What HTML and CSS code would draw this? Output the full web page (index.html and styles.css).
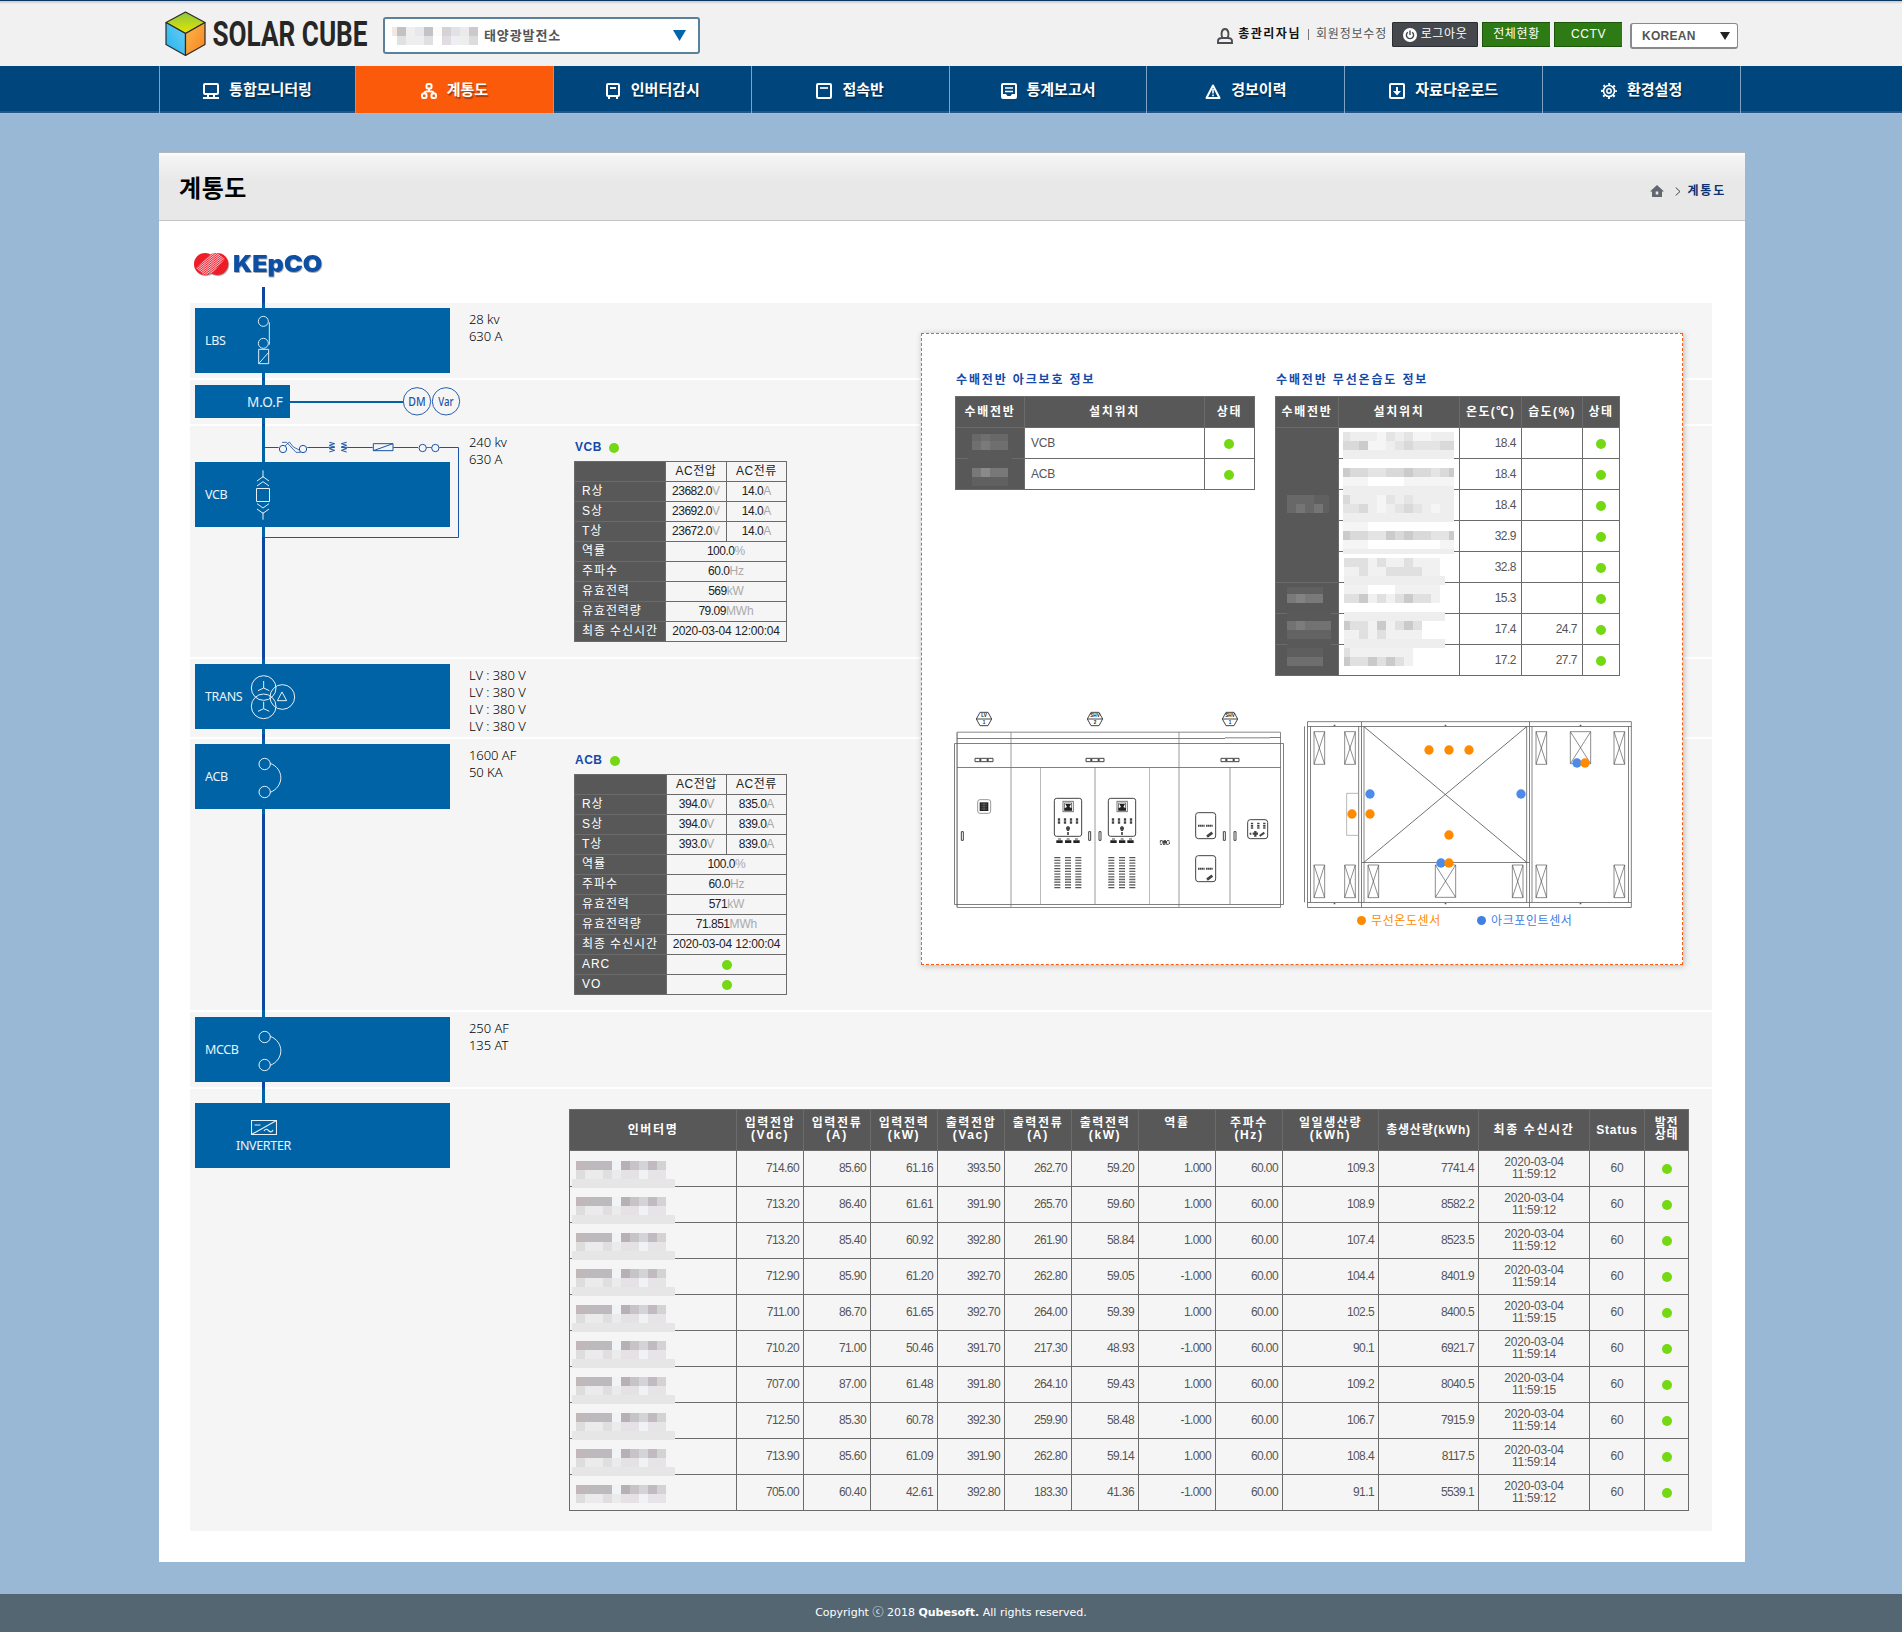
FILE: index.html
```html
<!DOCTYPE html>
<html lang="ko">
<head>
<meta charset="utf-8">
<title>SOLAR CUBE - 계통도</title>
<link rel="stylesheet" href="styles.css">
</head>
<body>
<header class="top">
  <div class="top-inner">
    <svg class="brand" width="206" height="50" viewBox="163 8 206 50" role="img" aria-label="SOLAR CUBE">
      <defs>
        <linearGradient id="cubeTop" x1="0" y1="0" x2="0" y2="1"><stop offset="0" stop-color="#8dc63f"/><stop offset="1" stop-color="#e6e600"/></linearGradient>
        <linearGradient id="cubeLeft" x1="0" y1="1" x2="1" y2="0"><stop offset="0" stop-color="#1fb4ee"/><stop offset="1" stop-color="#6fcdf5"/></linearGradient>
        <linearGradient id="cubeRight" x1="0" y1="0" x2="1" y2="1"><stop offset="0" stop-color="#fdb94a"/><stop offset="1" stop-color="#f58220"/></linearGradient>
      </defs>
      <g stroke="#2b2b2b" stroke-width="1.2" stroke-linejoin="round">
        <path fill="url(#cubeTop)" d="M185.5 12 205 22.500 185.500 33.500 166 22.500z"/>
        <path fill="url(#cubeLeft)" d="M166 22.500 185.500 33.500V55.500L166 44.500z"/>
        <path fill="url(#cubeRight)" d="M205 22.500 185.500 33.500V55.500L205 44.500z"/>
      </g>
      <text class="brand-text" x="212.500" y="46" textLength="155" lengthAdjust="spacingAndGlyphs">SOLAR CUBE</text>
    </svg>
    <div class="plant-select"><span class="px px-plant"></span><span class="plant-name">태양광발전소</span><svg width="13" height="11" viewBox="0 0 13 11"><path fill="#0065ab" d="M0 0h13L6.500 11z"/></svg></div>
    <div class="user">
      <svg width="16" height="16" viewBox="0 0 16 16" fill="none" stroke="#4b4d52" stroke-width="1.900"><path d="M5.300 9.800C4 7.500 4 1 8 1s4 6.500 2.700 8.800M5 10h6c2.500 0 4 .8 4 3v2H1v-2c0-2.200 1.500-3 4-3z"/></svg>
      <b>총관리자님</b><i></i><span>회원정보수정</span>
    </div>
    <a class="btn btn-logout"><svg width="14" height="14" viewBox="0 0 14 14"><circle cx="7" cy="7" r="7" fill="#fff"/><path d="M4.800 4.200a3.600 3.600 0 1 0 4.400 0M7 2.500v4.500" fill="none" stroke="#44484c" stroke-width="1.400"/></svg>로그아웃</a>
    <a class="btn btn-green">전체현황</a>
    <a class="btn btn-green">CCTV</a>
    <div class="lang">KOREAN<svg width="10" height="8" viewBox="0 0 10 8"><path fill="#222" d="M0 0h10L5 8z"/></svg></div>
  </div>
</header>

<nav class="gnb">
  <ul>
    <li><svg width="16" height="16" viewBox="0 0 16 16" fill="none" stroke="#fff" stroke-width="2"><rect x="1" y="1" width="14" height="10" rx="1"/><path d="M0 15h16M5 11v3M11 11v3"/></svg>통합모니터링</li>
    <li class="on"><svg width="16" height="16" viewBox="0 0 16 16" fill="none" stroke="#fff" stroke-width="2"><rect x="5.500" y="1" width="5" height="4.500" rx="1.500"/><rect x="1" y="10.500" width="4.500" height="4.500" rx="1.500"/><rect x="10.500" y="10.500" width="4.500" height="4.500" rx="1.500"/><path d="M8 6v2.500M3.300 10.500C3.300 8.500 5 8.200 8 8.200s4.700.3 4.700 2.300"/></svg>계통도</li>
    <li><svg width="16" height="16" viewBox="0 0 16 16" fill="none" stroke="#fff" stroke-width="2"><rect x="2" y="1" width="12" height="12" rx="1"/><path d="M5 5h6M4 13v3M12 13v3"/></svg>인버터감시</li>
    <li><svg width="16" height="16" viewBox="0 0 16 16" fill="none" stroke="#fff" stroke-width="2"><rect x="1" y="1" width="14" height="14" rx="1"/><path d="M4 5h8" stroke-width="1.700"/></svg>접속반</li>
    <li><svg width="16" height="16" viewBox="0 0 16 16" fill="none" stroke="#fff" stroke-width="2"><rect x="1" y="1" width="14" height="14" rx="1"/><path d="M4 5h8M4 8.500h8" stroke-width="1.500"/><path fill="#fff" stroke="none" d="M1 11h4l1.500 2h3L11 11h4v4H1z"/></svg>통계보고서</li>
    <li><svg width="16" height="16" viewBox="0 0 16 16" fill="none" stroke="#fff" stroke-width="2"><path d="M8 2.500 14.500 15h-13z" stroke-linejoin="round"/><path d="M8 6v4.500M8 11.500v1.800" stroke-width="1.600"/></svg>경보이력</li>
    <li><svg width="16" height="16" viewBox="0 0 16 16" fill="none" stroke="#fff" stroke-width="2"><rect x="1" y="1" width="14" height="14" rx="1"/><path d="M8 4v6" /><path fill="#fff" stroke="none" d="M4 8h8l-4 4.500z"/></svg>자료다운로드</li>
    <li><svg width="16" height="16" viewBox="0 0 16 16" fill="none" stroke="#fff"><circle cx="8" cy="8" r="5.500" stroke-width="1.600"/><circle cx="8" cy="8" r="2.200" stroke-width="1.500"/><circle cx="8" cy="8" r="7" stroke-width="2" stroke-dasharray="2 3.498" stroke-dashoffset="1"/></svg>환경설정</li>
  </ul>
</nav>

<main class="page">
  <div class="page-head">
    <h1>계통도</h1>
    <p class="crumb"><svg width="14" height="12" viewBox="0 0 14 12"><path fill="#63666e" fill-rule="evenodd" d="M7 0 14 6.500H12V12H2V6.500H0zM5.700 6.500v3h2.600v-3z"/></svg><svg width="6" height="9" viewBox="0 0 6 9"><path d="M.7.500 5 4.500.7 8.500" fill="none" stroke="#444"/></svg><b>계통도</b></p>
  </div>

  <div class="body">
    <svg class="kepco" width="137" height="36" viewBox="36 45 411 108" role="img" aria-label="KEPCO">
      <defs>
        <pattern id="hatch" width="6" height="5" patternUnits="userSpaceOnUse" patternTransform="rotate(-38)"><rect width="6" height="5" fill="#ee2535"/><rect width="6" height="2.500" fill="#fbc4c7"/></pattern>
      </defs>
      <g class="kepco-mark">
        <ellipse cx="75" cy="87" rx="33" ry="33" fill="#ee1c25"/>
        <ellipse cx="112" cy="87" rx="33" ry="33" fill="#ee1c25"/>
        <path fill="url(#hatch)" d="M48 100 93 56 114 54 134 72 98 114 72 120z"/>
        <text class="kepco-text" x="159" y="111" textLength="268" lengthAdjust="spacingAndGlyphs">KEpCO</text>
      </g>
    </svg>

    <div class="diagram">
      <div class="bus"></div>

      <section class="row r-lbs">
        <div class="unit"><span>LBS</span>
          <svg width="60" height="65" viewBox="195 219 180 195" fill="none" stroke="#dceaf5" stroke-width="3"><circle cx="250" cy="259" r="15"/><circle cx="250" cy="325" r="15"/><path d="M268 262V329M236 343h30v43h-30zM236 386l30-34"/></svg>
        </div>
        <p class="spec">28 kv<br>630 A</p>
      </section>

      <section class="row r-mof">
        <div class="unit unit-mof"><span>M.O.F</span></div>
        <svg width="171" height="33" viewBox="330 450 513 99"><path d="M330 501h340" stroke="#0063a6" stroke-width="6"/><g fill="none" stroke="#2a5cab" stroke-width="3"><circle cx="711" cy="499" r="41"/><circle cx="798" cy="499" r="41"/></g><g class="meter"><text x="711" y="512" textLength="52" lengthAdjust="spacingAndGlyphs">DM</text><text x="798" y="512" textLength="46" lengthAdjust="spacingAndGlyphs">Var</text></g></svg>
      </section>

      <section class="row r-vcb">
        <svg class="loop" width="198" height="106" viewBox="246 600 594 318" fill="none" stroke="#1b54a6" stroke-width="3"><path d="M252 637.500h44M382 637.500h62M504 637.500h74M640 637.500h74M778 637.500h57.500V907.500H252"/><circle cx="309" cy="642" r="11"/><circle cx="369" cy="642" r="11"/><circle cx="728" cy="639" r="11"/><circle cx="766" cy="639" r="11"/><path d="M739 637.500h16M306 622h14l28 30h14M316 632l12-11 12 15 20 10" stroke-width="2.500"/><path d="M444 637h20M504 637h-20M448 622l16 4-16 5 16 5-16 5 16 5-16 5M500 622l-16 4 16 5-16 5 16 5-16 5 16 5" stroke-width="3"/><path d="M580 626h59v21h-59zM580 647l59-21"/></svg>
        <div class="unit"><span>VCB</span>
          <svg width="60" height="65" viewBox="195 681 180 195" fill="none" stroke="#e6f0f8" stroke-width="3"><path d="M249 706v22M249 832v22M231 738l18-13 18 13M231 753l18-13 18 13M231 806l18 13 18-13M231 822l18 13 18-13M229.500 760.500h39v39h-39z"/></svg>
        </div>
        <p class="spec">240 kv<br>630 A</p>
        <div class="meas">
          <h3>VCB<i class="dot"></i></h3>
          <table class="grid mini">
            <colgroup><col style="width:92px"><col style="width:61px"><col style="width:60px"></colgroup>
            <tr><th></th><td>AC전압</td><td>AC전류</td></tr>
            <tr><th>R상</th><td><b>23682.0</b>V</td><td><b>14.0</b>A</td></tr>
            <tr><th>S상</th><td><b>23692.0</b>V</td><td><b>14.0</b>A</td></tr>
            <tr><th>T상</th><td><b>23672.0</b>V</td><td><b>14.0</b>A</td></tr>
            <tr><th>역률</th><td colspan="2"><b>100.0</b>%</td></tr>
            <tr><th>주파수</th><td colspan="2"><b>60.0</b>Hz</td></tr>
            <tr><th>유효전력</th><td colspan="2"><b>569</b>kW</td></tr>
            <tr><th>유효전력량</th><td colspan="2"><b>79.09</b>MWh</td></tr>
            <tr><th>최종 수신시간</th><td colspan="2"><b class="time">2020-03-04 12:00:04</b></td></tr>
          </table>
        </div>
      </section>

      <section class="row r-trans">
        <div class="unit"><span>TRANS</span>
          <svg width="60" height="65" viewBox="195 327 180 195" fill="none" stroke="#e6f0f8" stroke-width="3"><circle cx="251" cy="399" r="37"/><circle cx="251" cy="454" r="37"/><circle cx="307" cy="426" r="37"/><path d="M251 378v21l-17 8M251 399l17 8M251 440v21l-17 8M251 461l17 8M306 411l-14 26h28z"/></svg>
        </div>
        <p class="spec">LV : 380 V<br>LV : 380 V<br>LV : 380 V<br>LV : 380 V</p>
      </section>

      <section class="row r-acb">
        <div class="unit"><span>ACB</span>
          <svg width="60" height="65" viewBox="195 567 180 195" fill="none" stroke="#e6f0f8" stroke-width="3"><circle cx="254" cy="627" r="17"/><circle cx="254" cy="711" r="17"/><path d="M271 625C313 642 313 694 271 712"/></svg>
        </div>
        <p class="spec">1600 AF<br>50 KA</p>
        <div class="meas">
          <h3>ACB<i class="dot"></i></h3>
          <table class="grid mini">
            <colgroup><col style="width:93px"><col style="width:60px"><col style="width:60px"></colgroup>
            <tr><th></th><td>AC전압</td><td>AC전류</td></tr>
            <tr><th>R상</th><td><b>394.0</b>V</td><td><b>835.0</b>A</td></tr>
            <tr><th>S상</th><td><b>394.0</b>V</td><td><b>839.0</b>A</td></tr>
            <tr><th>T상</th><td><b>393.0</b>V</td><td><b>839.0</b>A</td></tr>
            <tr><th>역률</th><td colspan="2"><b>100.0</b>%</td></tr>
            <tr><th>주파수</th><td colspan="2"><b>60.0</b>Hz</td></tr>
            <tr><th>유효전력</th><td colspan="2"><b>571</b>kW</td></tr>
            <tr><th>유효전력량</th><td colspan="2"><b>71.851</b>MWh</td></tr>
            <tr><th>최종 수신시간</th><td colspan="2"><b class="time">2020-03-04 12:00:04</b></td></tr>
            <tr><th>ARC</th><td colspan="2"><i class="dot"></i></td></tr>
            <tr><th>VO</th><td colspan="2"><i class="dot"></i></td></tr>
          </table>
        </div>
      </section>

      <section class="row r-mccb">
        <div class="unit"><span>MCCB</span>
          <svg width="60" height="65" viewBox="195 567 180 195" fill="none" stroke="#e6f0f8" stroke-width="3"><circle cx="254" cy="627" r="17"/><circle cx="254" cy="711" r="17"/><path d="M271 625C313 642 313 694 271 712"/></svg>
        </div>
        <p class="spec">250 AF<br>135 AT</p>
      </section>

      <section class="row r-inv">
        <div class="unit unit-inv">
          <svg width="26" height="15" viewBox="0 0 26 15" fill="none" stroke="#e6f0f8"><path d="M.5.500h25v14H.5zM.5 14.500l25-14M3.500 5h6M13 11c2-3 3.500-1.500 5 0s3 1 4-1" stroke-width="1.100"/></svg>
          <span>INVERTER</span>
        </div>
        <table class="grid inv">
          <colgroup><col style="width:168px"><col style="width:67px"><col style="width:67px"><col style="width:67px"><col style="width:67px"><col style="width:67px"><col style="width:67px"><col style="width:77px"><col style="width:67px"><col style="width:96px"><col style="width:100px"><col style="width:111px"><col style="width:55px"><col style="width:44px"></colgroup>
          <tr><th>인버터명</th><th>입력전압<br>(Vdc)</th><th>입력전류<br>(A)</th><th>입력전력<br>(kW)</th><th>출력전압<br>(Vac)</th><th>출력전류<br>(A)</th><th>출력전력<br>(kW)</th><th>역률<br>&nbsp;</th><th>주파수<br>(Hz)</th><th>일일생산량<br>(kWh)</th><th class="mid">총생산량(kWh)</th><th>최종 수신시간</th><th class="mid">Status</th><th class="tight">발전<br>상태</th></tr>
          <tr><td><i class="px px-name"></i></td><td>714.60</td><td>85.60</td><td>61.16</td><td>393.50</td><td>262.70</td><td>59.20</td><td>1.000</td><td>60.00</td><td>109.3</td><td>7741.4</td><td>2020-03-04<br>11:59:12</td><td>60</td><td><i class="dot"></i></td></tr>
          <tr><td><i class="px px-name"></i></td><td>713.20</td><td>86.40</td><td>61.61</td><td>391.90</td><td>265.70</td><td>59.60</td><td>1.000</td><td>60.00</td><td>108.9</td><td>8582.2</td><td>2020-03-04<br>11:59:12</td><td>60</td><td><i class="dot"></i></td></tr>
          <tr><td><i class="px px-name"></i></td><td>713.20</td><td>85.40</td><td>60.92</td><td>392.80</td><td>261.90</td><td>58.84</td><td>1.000</td><td>60.00</td><td>107.4</td><td>8523.5</td><td>2020-03-04<br>11:59:12</td><td>60</td><td><i class="dot"></i></td></tr>
          <tr><td><i class="px px-name"></i></td><td>712.90</td><td>85.90</td><td>61.20</td><td>392.70</td><td>262.80</td><td>59.05</td><td>-1.000</td><td>60.00</td><td>104.4</td><td>8401.9</td><td>2020-03-04<br>11:59:14</td><td>60</td><td><i class="dot"></i></td></tr>
          <tr><td><i class="px px-name"></i></td><td>711.00</td><td>86.70</td><td>61.65</td><td>392.70</td><td>264.00</td><td>59.39</td><td>1.000</td><td>60.00</td><td>102.5</td><td>8400.5</td><td>2020-03-04<br>11:59:15</td><td>60</td><td><i class="dot"></i></td></tr>
          <tr><td><i class="px px-name"></i></td><td>710.20</td><td>71.00</td><td>50.46</td><td>391.70</td><td>217.30</td><td>48.93</td><td>-1.000</td><td>60.00</td><td>90.1</td><td>6921.7</td><td>2020-03-04<br>11:59:14</td><td>60</td><td><i class="dot"></i></td></tr>
          <tr><td><i class="px px-name"></i></td><td>707.00</td><td>87.00</td><td>61.48</td><td>391.80</td><td>264.10</td><td>59.43</td><td>1.000</td><td>60.00</td><td>109.2</td><td>8040.5</td><td>2020-03-04<br>11:59:15</td><td>60</td><td><i class="dot"></i></td></tr>
          <tr><td><i class="px px-name"></i></td><td>712.50</td><td>85.30</td><td>60.78</td><td>392.30</td><td>259.90</td><td>58.48</td><td>-1.000</td><td>60.00</td><td>106.7</td><td>7915.9</td><td>2020-03-04<br>11:59:14</td><td>60</td><td><i class="dot"></i></td></tr>
          <tr><td><i class="px px-name"></i></td><td>713.90</td><td>85.60</td><td>61.09</td><td>391.90</td><td>262.80</td><td>59.14</td><td>1.000</td><td>60.00</td><td>108.4</td><td>8117.5</td><td>2020-03-04<br>11:59:14</td><td>60</td><td><i class="dot"></i></td></tr>
          <tr><td><i class="px px-name"></i></td><td>705.00</td><td>60.40</td><td>42.61</td><td>392.80</td><td>183.30</td><td>41.36</td><td>-1.000</td><td>60.00</td><td>91.1</td><td>5539.1</td><td>2020-03-04<br>11:59:12</td><td>60</td><td><i class="dot"></i></td></tr>
        </table>
      </section>

      <aside class="board">
        <div class="board-tables">
          <div class="info">
            <h3>수배전반 아크보호 정보</h3>
            <table class="grid sw arc">
              <colgroup><col style="width:70px"><col style="width:180px"><col style="width:50px"></colgroup>
              <tr><th>수배전반</th><th>설치위치</th><th>상태</th></tr>
              <tr><th></th><td>VCB</td><td><i class="dot"></i></td></tr>
              <tr><th></th><td>ACB</td><td><i class="dot"></i></td></tr>
            </table>
            <svg class="mask mask-arc" width="44" height="52" viewBox="174 342 132 156" shape-rendering="crispEdges"><path fill="#686868" d="M186 342h108v21H186z"/><path fill="#6f6f6f" d="M213 342h27v21h-27zM186 363h108v27H186z"/><path fill="#7a7a7a" d="M213 363h27v27h-27z"/><path fill="#595959" d="M174 390h132v27H174z"/><path fill="#787878" d="M186 444h108v27H186z"/><path fill="#8a8a8a" d="M213 444h27v27h-27z"/><path fill="#606060" d="M186 471h108v27H186z"/></svg>
          </div>
          <div class="info">
            <h3>수배전반 무선온습도 정보</h3>
            <table class="grid sw temp">
              <colgroup><col style="width:64px"><col style="width:121px"><col style="width:62px"><col style="width:61px"><col style="width:37px"></colgroup>
              <tr><th>수배전반</th><th>설치위치</th><th>온도(℃)</th><th>습도(%)</th><th>상태</th></tr>
              <tr><th rowspan="5"></th><td></td><td>18.4</td><td></td><td><i class="dot"></i></td></tr>
              <tr><td></td><td>18.4</td><td></td><td><i class="dot"></i></td></tr>
              <tr><td></td><td>18.4</td><td></td><td><i class="dot"></i></td></tr>
              <tr><td></td><td>32.9</td><td></td><td><i class="dot"></i></td></tr>
              <tr><td></td><td>32.8</td><td></td><td><i class="dot"></i></td></tr>
              <tr><th></th><td></td><td>15.3</td><td></td><td><i class="dot"></i></td></tr>
              <tr><th></th><td></td><td>17.4</td><td>24.7</td><td><i class="dot"></i></td></tr>
              <tr><th></th><td></td><td>17.2</td><td>27.7</td><td><i class="dot"></i></td></tr>
            </table>
            <svg class="mask mask-temp" width="168" height="234" viewBox="81 336 504 702" shape-rendering="crispEdges">
              <path fill="#686868" d="M81 525h108v54H81z"/><path fill="#606060" d="M162 525h45v54h-45z"/><path fill="#757575" d="M108 552h27v27h-27zM162 552h27v27h-27z"/>
              <path fill="#606060" d="M81 801h108v21H81z"/><path fill="#797979" d="M81 822h108v27H81z"/><path fill="#838383" d="M108 822h27v27h-27z"/>
              <path fill="#595959" d="M81 876h132v27H81zM81 957h132v27H81z"/><path fill="#727272" d="M81 903h132v27H81z"/><path fill="#7c7c7c" d="M108 903h27v27h-27z"/><path fill="#636363" d="M81 930h132v27H81z"/><path fill="#5e5e5e" d="M81 984h108v27H81z"/><path fill="#6e6e6e" d="M81 1011h108v27H81z"/>
              <path fill="#eee" d="M249 336h333v366H249zM252 768h303v27H252zM252 876h303v27H252zM252 957h303v27H252z"/>
              <path fill="#fff" d="M249 417h333v27H249zM249 606h333v27H249zM249 660h333v27H249z"/>
              <path fill="#f5f5f5" d="M351 336h27v27h-27zM324 363h54v27h-54zM459 336h54v27h-54zM249 471h75v27h-75zM378 471h204v27H378zM351 525h27v54h-27zM513 552h27v27h-27zM249 660h75v27h-75zM540 660h42v27h-42zM249 606h75v27h-75z"/>
              <path fill="#fff" d="M324 471h108v27H324z"/>
              <path fill="#e4e4e4" d="M249 336h21v27h-21zM378 336h27v27h-27zM432 336h27v27h-27zM405 363h135v27H405zM378 525h27v27h-27zM432 525h27v27h-27zM249 552h48v27h-48zM405 552h27v27h-27zM459 552h27v27h-27zM324 444h258v27H324zM324 633h258v27H324z"/>
              <path fill="#d9d9d9" d="M249 363h48v27h-48zM540 363h42v27h-42zM432 363h27v27h-27zM249 525h21v27h-21zM297 552h27v27h-27zM432 552h27v27h-27zM249 444h75v27h-75zM378 444h54v27h-54zM459 444h54v27h-54zM540 444h27v27h-27zM270 633h54v27h-54zM405 633h108v27H405z"/>
              <path fill="#cbcbcb" d="M297 363h27v27h-27zM249 444h21v27h-21zM432 444h27v27h-27zM567 444h15v27h-15zM249 633h21v27h-21zM378 633h27v27h-27zM432 633h27v27h-27zM567 633h15v27h-15z"/>
              <path fill="#f1f1f1" d="M252 714h288v54H252zM252 795h72v27h-72zM405 795h135v27H405zM252 822h288v27H252zM252 903h234v54H252zM252 984h207v54H252z"/>
              <path fill="#fff" d="M252 849h303v27H252zM324 795h54v27h-54z"/>
              <path fill="#e0e0e0" d="M252 714h72v27h-72zM351 714h27v27h-27zM432 714h27v27h-27zM297 741h27v27h-27zM378 741h108v27H378zM252 822h45v27h-45zM351 822h27v27h-27zM405 822h27v27h-27zM459 822h54v27h-54zM270 903h54v27h-54zM405 903h81v27h-81zM297 930h27v27h-27zM351 930h27v27h-27zM252 984h18v27h-18zM270 1011h162v27H270z"/>
              <path fill="#cacaca" d="M297 822h27v27h-27zM432 822h27v27h-27zM252 903h18v27h-18zM351 903h27v27h-27zM432 903h27v27h-27zM252 1011h18v27h-18zM324 1011h27v27h-27zM378 1011h27v27h-27z"/>
            </svg>
          </div>
        </div>
        <div class="board-draw">
          <svg width="337" height="200" viewBox="60 30 1011 600" fill="none" stroke="#444" stroke-width="3">
            <defs>
              <g id="hex"><path d="M-23 0-12-20H12L23 0 12 20H-12zM-23 0H23"/></g>
              <g id="plate"><path d="M-27-5H27V5H-27z"/><path d="M-14 0h6M8 0h6" stroke-width="6"/></g>
              <g id="meter">
                <rect x="373" y="295" width="82" height="114" rx="7"/>
                <rect x="399" y="304" width="31" height="31" stroke="#777"/><rect x="404" y="309" width="21" height="21" stroke-width="2"/><path fill="#222" stroke="none" d="M403 332v-7l8-4-5-9h17l-5 9 8 4v7z"/>
                <g stroke-width="7"><path d="M387 355v16M405 355v16M423 355v16M441 355v16" stroke-dasharray="7 2"/><path d="M414 379v14M408 385h12"/><path d="M414 396v9" stroke-width="5"/></g>
                <path d="M379 425h19M405 425h19M430 425h19" stroke="#222" stroke-width="8"/><path d="M384 417h9M410 417h9M435 417h9"/>
                <path d="M382 471v94M414 471v94M445 471v94" stroke="#555" stroke-width="18" stroke-dasharray="4 4.200"/>
                <path d="M382 474v90M414 474v90M445 474v90" stroke="#fff" stroke-width="14" stroke-dasharray="1 7.200" opacity=".5"/>
              </g>
              <g id="earth"><rect x="797" y="338" width="60" height="78" rx="8"/><path d="M804 377h20M828 377h20" stroke-width="6" stroke-dasharray="5 1"/><path d="M831 410l16-12" stroke-width="8"/></g>
            </defs>
            <use href="#hex" x="162" y="57"/><use href="#hex" x="495" y="57"/><use href="#hex" x="900" y="57"/>
            <g class="tag"><text x="162" y="52">LV</text><text x="162" y="73">1</text><text x="495" y="52">SHV</text><text x="495" y="73">2</text><text x="900" y="52">SHV</text><text x="900" y="73">1</text></g>
            <path d="M243 96V622M747 96V622M495 202V613M900 202V613M81 96V622" stroke="#c4c4c4" stroke-width="5"/>
            <path d="M331.500 202V613M658.500 202V613" stroke="#999" stroke-width="2"/>
            <path d="M81.500 96.500H1051.500V622.500H81.500z" stroke="#888"/><path d="M73.500 130.500H1060.500V613.500H73.500z" stroke="#666" stroke-width="2.500"/>
            <path d="M81 115.500H885M1020 112.500h32M885 113.500h135M81 202.500H1052" stroke="#666" stroke-width="2.500"/>
            <use href="#plate" x="162" y="180"/><use href="#plate" x="495" y="180"/><use href="#plate" x="900" y="180"/>
            <rect x="143" y="299" width="39" height="41" rx="7" stroke="#999"/><rect x="149" y="307" width="26" height="26" fill="#222" stroke="none"/><path d="M153 313h18M153 320h18M153 327h18M162 309v22" stroke="#888" stroke-width="1.500"/>
            <path d="M94 395h6v26h-6zM476 395h6v26h-6zM507 395h6v26h-6zM880 395h6v26h-6zM912 395h6v26h-6z"/>
            <use href="#meter"/><use href="#meter" x="162"/>
            <path d="M691 422h27v11h-27z" stroke-dasharray="7 3"/><path d="M697 427h14" stroke-width="8"/>
            <use href="#earth"/><use href="#earth" y="129"/>
            <rect x="953" y="359" width="60" height="57" rx="8"/><path d="M966 368v18M985 368v18M1003 368v18" stroke-width="7" stroke-dasharray="5 2"/><path d="M976 393v17M968 401h16" stroke-width="7"/><path d="M959 401h5M989 408l14-10" stroke-width="6"/>
          </svg>
          <div class="plan">
            <svg width="337" height="200" viewBox="30 30 1011 600" fill="none" stroke="#555" stroke-width="2.500">
              <defs>
                <g id="pillar"><path d="M0 0H32V98H0z" stroke="#777"/><path d="M0 0 32 98M32 0 0 98" stroke-width="2"/></g>
              </defs>
              <path d="M222 79V607M726 79V607" stroke="#c4c4c4" stroke-width="6"/>
              <path d="M52.500 65H1024V622.500H52.500zM52 79.500H1024M52 607.500H1024M43.500 79V607M61.500 79V607M206 79V607M214.500 65V622M710 79V607M718.500 65V622M1015.500 79V607M214 487.500H718" stroke="#666"/>
              <path d="M206 280h-36V406h36" stroke="#aaa"/>
              <path d="M222 80 710 487M710 80 222 487" stroke-width="2.500"/>
              <path d="M131 76h5M464 76h5M869 76h5M131 611h5M464 611h5M869 611h5" stroke-width="4"/>
              <use href="#pillar" x="72" y="95"/><use href="#pillar" x="164" y="95"/><use href="#pillar" x="738" y="95"/><use href="#pillar" x="972" y="95"/>
              <use href="#pillar" x="72" y="495"/><use href="#pillar" x="164" y="495"/><use href="#pillar" x="234" y="495"/><use href="#pillar" x="667" y="495"/><use href="#pillar" x="738" y="495"/><use href="#pillar" x="972" y="495"/>
              <path d="M841 95h61v96h-61zM841 95l61 96M902 95l-61 96M436 495h61v97h-61zM436 495l61 97M497 495l-61 97" stroke-width="2"/>
              <g stroke="none" fill="#4c8bea"><circle cx="240" cy="282" r="14"/><circle cx="693" cy="282" r="14"/><circle cx="861" cy="189" r="14"/><circle cx="453" cy="489" r="14"/></g>
              <g stroke="none" fill="#ff8a00"><circle cx="417" cy="150" r="14"/><circle cx="477" cy="150" r="14"/><circle cx="537" cy="150" r="14"/><circle cx="186" cy="342" r="14"/><circle cx="240" cy="342" r="14"/><circle cx="477" cy="405" r="14"/><circle cx="477" cy="489" r="14"/><circle cx="885" cy="189" r="14"/></g>
            </svg>
            <p class="legend"><span class="lg-temp">무선온도센서</span><span class="lg-arc">아크포인트센서</span></p>
          </div>
        </div>
      </aside>
    </div>
  </div>
</main>

<footer class="foot">Copyright ⓒ 2018 <b>Qubesoft.</b> All rights reserved.</footer>
</body>
</html>
```
FILE: styles.css
```css
* { box-sizing: border-box; }
body { margin: 0; background: #99b8d6; color: #222; font: 12px/1.2 "Liberation Sans", "Noto Sans CJK KR", sans-serif; }
h1, h3, p, ul { margin: 0; padding: 0; font-weight: normal; }
svg { display: block; flex: none; }
i { font-style: normal; }

/* top bar */
.top { height: 66px; background: linear-gradient(#c5c5cb, #f1f1f1 3px); border-top: 1px solid #0b3763; }
.top-inner { width: 1586px; height: 65px; margin: 0 0 0 159px; padding-left: 4px; display: flex; align-items: flex-start; }
.brand { margin-top: 7px; overflow: visible; }
.brand-text { font: bold 35px Roboto, sans-serif; fill: #262626; }
.plant-select { width: 317px; height: 37px; margin: 16px 0 0 14px; padding: 0 12px 0 7px; display: flex; align-items: center; border: 2px solid #5b8099; border-radius: 3px; background: #fff; }
.plant-name { flex: 1; margin-left: 3px; padding-top: 1px; color: #555; font-size: 13px; font-weight: bold; letter-spacing: .9px; }
.px { display: block; flex: none; background-repeat: no-repeat; }
.px-plant {
  width: 89px; height: 18px; margin-top: 1px;
  background-image:
    linear-gradient(90deg, #f3e9e3 5px, #c5bfc6 5px 14px, #f0eff0 14px 23px, #e8e8ea 23px 32px, #c3c2c9 32px 41px, #fbfbf8 41px 50px, #d4d2d5 50px 59px, #e1e1e8 59px 68px, #ebebec 68px 77px, #cdc8cd 77px 86px, #fff 86px),
    linear-gradient(90deg, #fff 5px, #e1e1e1 5px 14px, #eee 14px 32px, #e0e0e0 32px 41px, #fff 41px 50px, #e0dce1 50px 59px, #efeef5 59px 68px, #eee 68px 77px, #dcdcdc 77px 86px, #fff 86px);
  background-size: 100% 9px; background-position: 0 0, 0 9px;
}
.user { margin: 23px 0 0 auto; height: 20px; display: flex; align-items: center; color: #555; letter-spacing: .8px; white-space: nowrap; }
.user svg { margin: 4px 5px 0 0; }
.user b { color: #111; letter-spacing: 1.5px; }
.user i { width: 1px; height: 11px; margin: 0 7px; background: #777; }
.btn { height: 25px; margin-top: 21px; display: flex; align-items: center; justify-content: center; color: #fff; letter-spacing: .6px; white-space: nowrap; }
.btn-logout { width: 86px; margin-left: 5px; border: 1px solid #2b2e31; border-radius: 1px; background: #45494d; }
.btn-logout svg { margin: 1px 4px 0 0; }
.btn-green { width: 68px; margin-left: 4px; background: #2e7a15; border: solid #1d560b; border-width: 1px 0 1px 1px; }
.lang { width: 108px; height: 26px; margin: 22px 7px 0 8px; padding: 1px 7px 0 10px; display: flex; align-items: center; justify-content: space-between; border: 1px solid #8a8a8a; border-bottom-width: 2px; border-left-width: 2px; border-radius: 3px; background: #fff; color: #555; font-weight: bold; letter-spacing: .3px; }

/* main navigation */
.gnb { height: 48px; background: linear-gradient(#00457c 45px, #255587 45px 47px, #a5bdd6 47px); }
.gnb ul { width: 1582px; height: 47px; margin-left: 159px; display: flex; list-style: none; border-left: 1px solid #7fa3c4; }
.gnb li { flex: 1 1 0; display: flex; align-items: center; justify-content: center; gap: 10px; padding-top: 1px; border-right: 1px solid #7fa3c4; color: #fff; font-size: 15px; font-weight: bold; text-shadow: 1px 2px 1px rgba(0, 0, 0, .35); white-space: nowrap; }
.gnb li:first-child { flex: 0 0 196px; }
.gnb .on { background: #fb5a0a; }
.gnb svg { margin-top: 2px; }

/* page panel */
.page { width: 1586px; margin: 38px 0 32px 159px; background: #fff; }
.page-head { height: 69px; padding: 0 19px 0 20px; display: flex; align-items: center; justify-content: space-between; border-top: 1px solid #b4b6bb; border-bottom: 1px solid #c4c4c6; background: linear-gradient(#fff, #f5f5f5 3px, #e8e8e8 28px); }
.page-head h1 { padding-top: 6px; color: #000; font-size: 24px; font-weight: bold; letter-spacing: .6px; }
.crumb { display: flex; align-items: center; padding-top: 10px; color: #0b3272; }
.crumb svg + svg { margin: 1px 6px 0 11px; }
.crumb b { letter-spacing: 1.8px; }
.body { padding: 29px 33px 31px 31px; }
.kepco { margin: 0 0 17px 2px; }
.kepco-mark { filter: drop-shadow(2px 3px 2px rgba(0, 0, 0, .35)); }
.kepco-text { font: 900 68px Inter, sans-serif; fill: #0d4fa3; }

/* single line diagram */
.diagram { position: relative; display: flex; flex-direction: column; gap: 2px; }
.bus {
  position: absolute; left: 72px; top: -16px; width: 3px; height: 816px; z-index: 1;
  background: linear-gradient(#0d47a1 16px, #0063a6 16px 91px, #0d47a1 91px 93px, #0063a6 93px 137px, #0d47a1 137px 139px, #0063a6 139px 250px, #0d47a1 250px 372px, #0063a6 372px 447px, #0d47a1 447px 452px, #0063a6 452px 527px, #0d47a1 527px 723px, #0063a6 723px 795px, #0d47a1 795px 802px, #0063a6 802px);
}
.row { position: relative; padding: 5px 0 0 5px; display: flex; align-items: flex-start; background: #f5f5f5; }
.r-lbs { height: 75px; }
.r-mof { height: 44px; }
.r-vcb { height: 231px; padding-top: 36px; }
.r-trans { height: 78px; }
.r-acb { height: 271px; }
.r-mccb { height: 75px; }
.r-inv { height: 442px; padding-top: 14px; }
.r-vcb .spec { margin-top: -28px; }
.r-vcb .meas { margin-top: -23px; }
.unit { position: relative; z-index: 2; width: 255px; height: 65px; padding-left: 10px; display: flex; align-items: center; background: #0063a6; color: #eaf3fa; font: 12.500px "Noto Sans", sans-serif; letter-spacing: -.35px; }
.unit span { width: 40px; white-space: nowrap; }
.unit-mof { width: 95px; height: 33px; padding-left: 52px; font-size: 13.500px; letter-spacing: 0; }
.unit-inv { flex-direction: column; justify-content: center; align-items: flex-start; gap: 2px; padding: 2px 0 0 0; }
.unit-inv svg { margin-left: 56px; }
.unit-inv span { width: 137px; text-align: center; }
.meter text { font: 500 35px "Noto Sans", sans-serif; fill: #1d55a8; text-anchor: middle; }
.loop { position: absolute; left: 72px; top: 9px; z-index: 1; }
.spec { width: 105px; margin: 3px 0 0 19px; color: #000; font: 300 13px/17px "Noto Sans", "Open Sans", sans-serif; letter-spacing: -.05px; white-space: nowrap; }
.dot { display: inline-block; width: 10px; height: 10px; border-radius: 50%; background: #74d813; vertical-align: middle; }
.meas { margin-top: 8px; }
.meas h3 { height: 17px; margin-bottom: 5px; display: flex; align-items: center; gap: 7px; padding-left: 1px; color: #154aa8; font-size: 12px; font-weight: bold; letter-spacing: .5px; }

/* data grids */
.grid { table-layout: fixed; border-collapse: separate; border-spacing: 0; border-top: 1px solid #6b6b6b; }
.grid th, .grid td { padding: 0; border: solid #6b6b6b; border-width: 0 1px 1px 0; text-align: center; vertical-align: middle; white-space: nowrap; }
.grid th { background: #585858; color: #fff; font-weight: bold; }
.grid th:first-child { border-left-width: 1px; }
.mini { width: 213px; }
.mini th, .mini td { height: 20px; line-height: 16px; }
.mini tr { height: 20px; }
.mini th { padding-left: 7px; text-align: left; font-weight: normal; letter-spacing: .9px; padding-bottom: 2px; }
.mini td { color: #aaa; letter-spacing: -.1px; padding-bottom: 1px; }
.mini b { color: #222; font-weight: normal; letter-spacing: -.5px; }
.mini .time { letter-spacing: -.2px; }
.mini tr:first-child td { color: #222; letter-spacing: .5px; padding-bottom: 2px; }
.inv { width: 1120px; margin: 6px 0 0 119px; }
.inv th { height: 41px; line-height: 12px; letter-spacing: 1.6px; padding-bottom: 3px; }
.inv th:first-child, .inv th:nth-child(11), .inv th:nth-child(12), .inv th:nth-child(13) { padding-bottom: 0; }
.inv .mid { letter-spacing: .8px; }
.inv .tight { letter-spacing: .6px; }
.inv td { height: 36px; padding: 0 4px 2px 0; text-align: right; line-height: 12px; color: #555; letter-spacing: -.6px; }
.inv td:nth-child(n+12) { text-align: center; padding-right: 0; letter-spacing: -.2px; }
.inv td:nth-child(14) { padding-bottom: 0; }
.inv td:first-child { position: relative; border-left-width: 1px; }
.px-name {
  position: absolute; left: 2px; top: 10px; width: 103px; height: 27px;
  background-image:
    linear-gradient(90deg, #c2b8b9 9px, #bcbabd 9px 36px, #f0f4f7 36px 45px, #b7b0b5 45px 54px, #c6c4c7 54px 63px, #d4d4d6 63px 72px, #c1bac0 72px 81px, #d3d3d4 81px),
    linear-gradient(90deg, #ddd 9px, #ebebeb 9px 27px, #e0dee0 27px 36px, #ebebeb 36px 45px, #e4e2e4 45px 63px, #f0f2f4 63px 72px, #e6e4e6 72px),
    linear-gradient(#e6e6e6, #e6e6e6);
  background-size: 90px 9px, 90px 9px, 103px 9px; background-position: 4px 0, 4px 9px, 0 18px;
}
tr:last-child .px-name { height: 18px; }

/* switchboard overlay */
.board { position: absolute; left: 731px; top: 30px; z-index: 3; width: 762px; height: 632px; padding: 37px 0 0 33px; border: 1px dashed #fb5a0a; background: #fff; box-shadow: 1px 1px 6px rgba(0, 0, 0, .25); }
.board-tables { display: flex; gap: 20px; align-items: flex-start; }
.info { position: relative; }
.info h3 { height: 18px; margin-bottom: 7px; padding-left: 1px; color: #154aa8; font-size: 12px; line-height: 18px; font-weight: bold; letter-spacing: 1.85px; white-space: nowrap; }
.sw th, .sw td { height: 31px; letter-spacing: -.5px; }
.sw th { letter-spacing: 1.7px; }
.sw td { color: #555; background: #fff; padding: 0 5px 0 6px; }
.sw td:last-child { padding: 1px 1px 0 0; }
.arc { width: 300px; }
.arc td:nth-child(2) { text-align: left; letter-spacing: -.2px; }
.temp { width: 345px; }
.temp td { text-align: right; }
.temp td:last-child { text-align: center; }
.temp th:nth-child(n+3) { letter-spacing: 1.4px; }
.mask { position: absolute; }
.mask-arc { left: 13px; top: 63px; }
.mask-temp { left: 12px; top: 61px; }
.board-draw { margin: 34px 0 0 -5px; display: flex; gap: 13px; }
.tag text { font: bold 14px "Liberation Sans", sans-serif; fill: #222; stroke: none; text-anchor: middle; }
.legend { height: 22px; padding-left: 57px; display: flex; align-items: center; letter-spacing: .6px; }
.legend span { display: flex; align-items: center; gap: 5px; }
.legend span::before { content: ""; width: 9px; height: 9px; border-radius: 50%; background: currentColor; }
.lg-temp { width: 120px; color: #ff8a00; }
.lg-arc { color: #4080e6; }

.foot { height: 38px; overflow: hidden; background: #556673; color: #fff; font: 11px/38px "DejaVu Sans", "Noto Sans CJK KR", sans-serif; letter-spacing: 0; text-align: center; }
```
